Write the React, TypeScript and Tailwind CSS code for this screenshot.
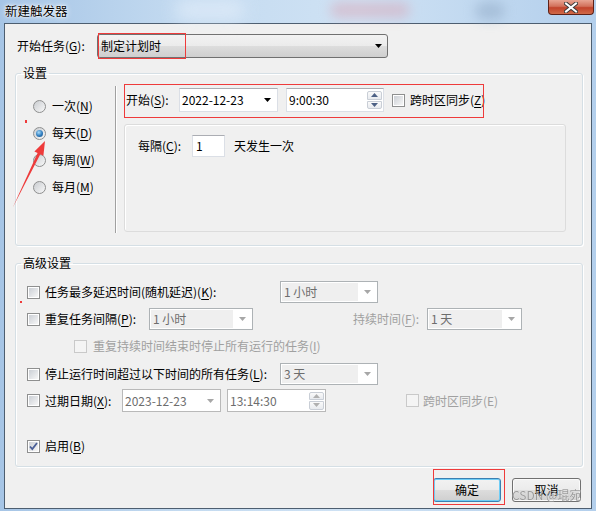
import React from 'react';

// label text with its underlined access key, e.g. 开始任务(G)
const Key = ({ label, k }: { label: string; k: string }) => (
  <>
    {label}(<span className="underline underline-offset-[2px]">{k}</span>)
  </>
);

const DownArrow = ({ color = '#000' }: { color?: string }) => (
  <svg width="7" height="4" viewBox="0 0 7 4" className="shrink-0">
    <path d="M0 0h7L3.5 4z" fill={color} />
  </svg>
);

const CheckBox = ({ checked = false, disabled = false }: { checked?: boolean; disabled?: boolean }) => (
  <span
    className={
      disabled
        ? 'relative flex w-[13px] h-[13px] shrink-0 border border-[#c9c9c9] bg-[#f4f4f4] p-[1px]'
        : 'relative flex w-[13px] h-[13px] shrink-0 border border-[#8e8f8f] bg-white p-[1px]'
    }
  >
    <span
      className={
        disabled
          ? 'flex-1 bg-[#f4f4f4]'
          : 'flex-1 bg-gradient-to-br from-[#cbcfd5] to-[#f7f7f7]'
      }
    />
    {checked && (
      <svg width="11" height="11" viewBox="0 0 11 11" className="absolute left-[0px] top-[0px]">
        <path d="M2 5.5l2.3 2.6L9 2" stroke="#4a5f97" strokeWidth="1.8" fill="none" />
      </svg>
    )}
  </span>
);

const Radio = ({ checked = false }: { checked?: boolean }) => (
  <span className="flex items-center justify-center w-[13px] h-[13px] shrink-0 rounded-full border border-[#8e8f8f] bg-[linear-gradient(135deg,#c9ccd0,#f8f8f8)]">
    {checked && (
      <span className="w-[7px] h-[7px] rounded-full bg-[radial-gradient(circle_at_40%_35%,#a8dcfb,#2e7bbd_55%,#1a4e80)]" />
    )}
  </span>
);

const Spinner = ({ disabled = false }: { disabled?: boolean }) => {
  const c = disabled ? '#b0b0b0' : '#4d6185';
  return (
    <div className="flex flex-col w-[15px] h-[18px] gap-[1px] mr-[1px]">
      <div className="flex-1 flex items-center justify-center border border-[#c9ced6] rounded-t-[2px] bg-[linear-gradient(#fafafa,#e8ebef)]">
        <svg width="7" height="4" viewBox="0 0 7 4"><path d="M0 4h7L3.5 0z" fill={c} /></svg>
      </div>
      <div className="flex-1 flex items-center justify-center border border-[#c9ced6] rounded-b-[2px] bg-[linear-gradient(#fafafa,#e8ebef)]">
        <svg width="7" height="4" viewBox="0 0 7 4"><path d="M0 0h7L3.5 4z" fill={c} /></svg>
      </div>
    </div>
  );
};

// greyed-out dropdown used in the advanced block
const DisabledCombo = ({ text, width }: { text: string; width: string }) => (
  <div className={`${width} h-[22px] flex border border-[#adb2b5] bg-white p-[1px]`}>
    <span className="flex-1 flex items-center pl-[2px] bg-[#efefef] text-[#6d6d6d]">{text}</span>
    <span className="w-[18px] flex items-center justify-center">
      <DownArrow color="#a7a7a7" />
    </span>
  </div>
);

export default function App() {
  return (
    <div className="relative w-[596px] h-[511px] overflow-hidden flex flex-col bg-[linear-gradient(90deg,#a6c5e6,#c3daf0_30%,#cfe2f4_60%,#b3cfec)] font-['Noto_Sans_CJK_SC',sans-serif] text-[12px] leading-[16px] text-black">
      {/* aero title bar */}
      <div className="relative h-[23px] shrink-0">
        <div className="absolute left-[330px] top-[2px] w-[80px] h-[16px] rounded-full bg-[#d9a5b5] opacity-50 blur-[6px]" />
        <div className="absolute left-[175px] top-[0px] w-[70px] h-[20px] rounded-full bg-[#e3eefa] opacity-70 blur-[8px]" />
        <div className="absolute left-[475px] top-[2px] w-[30px] h-[18px] rounded-full bg-[#8fa8c4] opacity-50 blur-[6px]" />
        <span className="absolute left-[5px] top-[3px] text-[12.5px] [text-shadow:0_0_6px_#fff,0_0_3px_#fff,0_0_1px_#fff]">
          新建触发器
        </span>
        <div className="absolute left-[548px] top-0 w-[46px] h-[15px] rounded-b-[4px] border border-t-0 border-[#5e2117] bg-[linear-gradient(#e8a593,#d2715b_45%,#c2432b_55%,#d06a48)] flex items-center justify-center">
          <svg width="14" height="11" viewBox="0 0 14 11">
            <path d="M2 1.5l10 8M12 1.5l-10 8" stroke="#3a3a3a" strokeWidth="4" strokeLinecap="square" />
            <path d="M2 1.5l10 8M12 1.5l-10 8" stroke="#fff" strokeWidth="2" strokeLinecap="square" />
          </svg>
        </div>
      </div>

      {/* client area */}
      <div className="ml-[4px] mr-[4px] mb-[2px] flex-1 flex flex-col border border-[#4d5e70] bg-[#f0f0f0]">
        <div className="flex items-center mt-[10px] pl-[12px]">
          <span className="w-[80px]">
            <Key label="开始任务" k="G" />:
          </span>
          <div className="w-[291px] h-[24px] flex items-center pl-[3px] pr-[5px] border border-[#707070] rounded-[3px] bg-[linear-gradient(#f2f2f2,#ebebeb_50%,#dddddd_50%,#cfcfcf)]">
            <span className="flex-1">制定计划时</span>
            <DownArrow />
          </div>
        </div>

        {/* 设置 */}
        <fieldset className="mt-[7px] ml-[10px] mr-[8px] h-[181px] border border-[#d5dfe5] rounded-[3px] shadow-[inset_1px_1px_0_#fff,1px_1px_0_#fff]">
          <legend className="ml-[5px] px-[2px]">设置</legend>
          <div className="flex">
            <div className="w-[99px] pl-[17px] pt-[17px] flex flex-col gap-[11px]">
              <div className="flex items-center h-[16px] gap-[6px]">
                <Radio />
                <span><Key label="一次" k="N" /></span>
              </div>
              <div className="flex items-center h-[16px] gap-[6px]">
                <Radio checked />
                <span><Key label="每天" k="D" /></span>
              </div>
              <div className="flex items-center h-[16px] gap-[6px]">
                <Radio />
                <span><Key label="每周" k="W" /></span>
              </div>
              <div className="flex items-center h-[16px] gap-[6px]">
                <Radio />
                <span><Key label="每月" k="M" /></span>
              </div>
            </div>
            <div className="mt-[5px] w-[2px] h-[147px] border-l border-[#a0a0a0] border-r border-r-white" />
            <div className="ml-[7px] flex flex-col">
              <div className="mt-[7px] flex items-center h-[24px]">
                <span className="w-[55px] pl-[2px]">
                  <Key label="开始" k="S" />:
                </span>
                <div className="w-[99px] h-[24px] flex items-center pl-[2px] pr-[6px] border border-[#dbdfe6] border-t-[#abadb3] bg-white">
                  <span className="flex-1">2022-12-23</span>
                  <DownArrow />
                </div>
                <div className="ml-[8px] w-[98px] h-[24px] flex items-center pl-[2px] border border-[#dbdfe6] border-t-[#abadb3] bg-white">
                  <span className="flex-1">9:00:30</span>
                  <Spinner />
                </div>
                <span className="ml-[8px]">
                  <CheckBox />
                </span>
                <span className="ml-[5px]">
                  跨时区同步(<span className="underline underline-offset-[2px]">Z</span>)
                </span>
              </div>
              <div className="mt-[12px] w-[442px] h-[108px] border border-[#dcdcdc] rounded-[3px] shadow-[inset_1px_1px_0_#fff]">
                <div className="flex items-center pl-[13px] pt-[10px]">
                  <span className="w-[54px]">
                    <Key label="每隔" k="C" />:
                  </span>
                  <div className="w-[33px] h-[22px] flex items-center pl-[3px] border border-[#dbdfe6] border-t-[#abadb3] bg-white">1</div>
                  <span className="ml-[9px]">天发生一次</span>
                </div>
              </div>
            </div>
          </div>
        </fieldset>

        {/* 高级设置 */}
        <fieldset className="mt-[9px] ml-[10px] mr-[8px] h-[212px] border border-[#d5dfe5] rounded-[3px] shadow-[inset_1px_1px_0_#fff,1px_1px_0_#fff]">
          <legend className="ml-[5px] px-[2px]">高级设置</legend>
          <div className="flex flex-col pl-[11px]">
            <div className="mt-[10px] flex items-center h-[22px]">
              <CheckBox />
              <span className="ml-[5px] w-[235px]">
                任务最多延迟时间(随机延迟)(<span className="underline underline-offset-[2px]">K</span>):
              </span>
              <DisabledCombo text="1 小时" width="w-[98px]" />
            </div>
            <div className="mt-[5px] flex items-center h-[22px]">
              <CheckBox />
              <span className="ml-[5px] w-[104px]">
                <Key label="重复任务间隔" k="P" />:
              </span>
              <DisabledCombo text="1 小时" width="w-[104px]" />
              <span className="ml-[100px] w-[74px] text-[#a0a0a0]">
                持续时间(<span className="underline underline-offset-[2px]">F</span>):
              </span>
              <DisabledCombo text="1 天" width="w-[95px]" />
            </div>
            <div className="mt-[8px] flex items-center h-[16px] pl-[47px]">
              <CheckBox disabled />
              <span className="ml-[6px] text-[#a0a0a0]">
                重复持续时间结束时停止所有运行的任务(<span className="underline underline-offset-[2px]">I</span>)
              </span>
            </div>
            <div className="mt-[9px] flex items-center h-[22px]">
              <CheckBox />
              <span className="ml-[5px] w-[235px]">
                <Key label="停止运行时间超过以下时间的所有任务" k="L" />:
              </span>
              <DisabledCombo text="3 天" width="w-[98px]" />
            </div>
            <div className="mt-[4px] flex items-center h-[23px]">
              <CheckBox />
              <span className="ml-[5px] w-[77px]">
                <Key label="过期日期" k="X" />:
              </span>
              <div className="w-[99px] h-[23px] flex items-center pl-[2px] pr-[6px] border border-[#b9b9b9] bg-white text-[#6d6d6d]">
                <span className="flex-1">2023-12-23</span>
                <DownArrow color="#a7a7a7" />
              </div>
              <div className="ml-[6px] w-[99px] h-[23px] flex items-center pl-[2px] border border-[#b9b9b9] bg-white text-[#6d6d6d]">
                <span className="flex-1">13:14:30</span>
                <Spinner disabled />
              </div>
              <span className="ml-[80px]">
                <CheckBox disabled />
              </span>
              <span className="ml-[4px] text-[#a0a0a0]">跨时区同步(E)</span>
            </div>
            <div className="mt-[26px] flex items-center h-[16px]">
              <CheckBox checked />
              <span className="ml-[5px]">
                <Key label="启用" k="B" />
              </span>
            </div>
          </div>
        </fieldset>

        <div className="mt-[11px] mr-[10px] flex justify-end gap-[11px]">
          <button className="w-[68px] h-[24px] rounded-[3px] border border-[#3c7fb1] shadow-[inset_0_0_0_1px_#6fcdf6] bg-[linear-gradient(#f2f2f2,#ebebeb_50%,#dddddd_50%,#cfcfcf)]">
            确定
          </button>
          <button className="w-[69px] h-[24px] rounded-[3px] border border-[#707070] shadow-[inset_0_0_0_1px_#fafafa] bg-[linear-gradient(#f2f2f2,#ebebeb_50%,#dddddd_50%,#cfcfcf)]">
            取消
          </button>
        </div>
      </div>

      {/* red markup drawn on top of the dialog */}
      <div className="absolute left-[98px] top-[33px] w-[88px] h-[26px] border-[1.5px] border-[#ee3b3b]" />
      <div className="absolute left-[124px] top-[84px] w-[360px] h-[34px] border-[1.5px] border-[#ee3b3b]" />
      <div className="absolute left-[433px] top-[469px] w-[72px] h-[36px] border-[1.5px] border-[#ee3b3b]" />
      <div className="absolute left-[25px] top-[120px] w-[2px] h-[3px] bg-[#ee3b3b]" />
      <div className="absolute left-[20px] top-[301px] w-[2px] h-[2px] bg-[#ee3b3b]" />
      <svg className="absolute left-0 top-0" width="60" height="220" viewBox="0 0 60 220">
        <path d="M13 207L37.6 153 34.4 151.4 45 141 43.4 155.8 40.3 154.3z" fill="#ee3b3b" />
      </svg>

      {/* site watermark */}
      <span className="absolute left-[512px] top-[488px] whitespace-nowrap text-[12px] leading-[14px] text-[#8c8c8c] opacity-80 [text-shadow:0_0_1px_#fff]">
        CSDN @琨宛
      </span>
    </div>
  );
}
